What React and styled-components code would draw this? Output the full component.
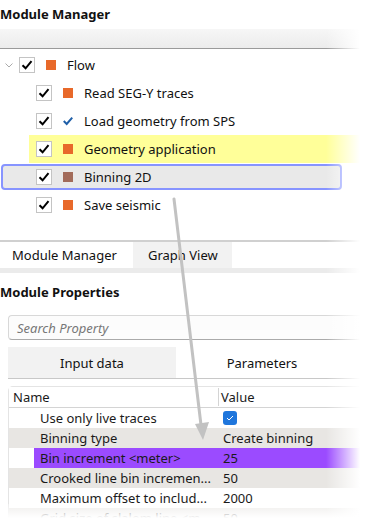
import React from 'react';
import styled, { createGlobalStyle } from 'styled-components';

const GlobalStyle = createGlobalStyle`
  html, body { margin: 0; padding: 0; background: #fff; }
  body { font-family: "Noto Sans", "Open Sans", sans-serif; font-size: 12px; color: #1a1a1a; }
  * { box-sizing: border-box; }
`;

const Page = styled.div`
  position: relative;
  width: 366px;
  height: 518px;
  overflow: hidden;
  background: #fff;
`;

const Title = styled.div`
  font-weight: 700;
  font-size: 13px;
  height: 29px;
  padding: 5px 0 0 0;
  color: #111;
`;

const Toolbar = styled.div`
  height: 20px;
  background: linear-gradient(#f6f6f6, #ececec);
  border-bottom: 1px solid #9a9a9a;
`;

const Tree = styled.div`
  display: flex;
  flex-direction: column;
  padding-top: 2px;
  height: 193px;
  border-bottom: 2px solid #d0d0d0;
`;

const Row = styled.div`
  display: flex;
  align-items: center;
  height: 28px;
  padding-left: ${(p) => p.$indent}px;
  margin-left: ${(p) => p.$offset || 0}px;
  background: ${(p) => p.$bg || 'transparent'};
  ${(p) =>
    p.$selected &&
    `
    border: 2px solid #8794ff;
    border-radius: 4px;
    background: #e9e9e9;
    height: 26px;
    margin: 1px 24px 1px 1px;
  `}
`;

const Chevron = styled.span`
  width: 21px;
  display: flex;
  justify-content: center;
  margin-left: -2px;
`;

const Check = styled.span`
  width: 16px;
  height: 16px;
  border: 1px solid #c4c4c4;
  background: #fff;
  display: flex;
  align-items: center;
  justify-content: center;
  margin-right: 11px;
`;

const Square = styled.span`
  width: 10px;
  height: 10px;
  background: ${(p) => p.$color};
  margin-right: 11px;
`;

const IconSlot = styled.span`
  width: 10px;
  display: flex;
  justify-content: center;
  margin-right: 11px;
`;

const Label = styled.span`
  font-size: 13px;
  color: #111;
`;

const TabBar = styled.div`
  display: flex;
  height: 31px;
  border-bottom: 5px solid #ebebeb;
`;

const Tab = styled.div`
  width: ${(p) => p.$w}px;
  display: flex;
  align-items: center;
  justify-content: ${(p) => (p.$center ? 'center' : 'flex-start')};
  padding-left: ${(p) => (p.$center ? 0 : p.$pad || 12)}px;
  background: ${(p) => (p.$active ? '#fff' : '#f2f2f2')};
  font-size: 13px;
  color: #111;
`;

const SubTitle = styled(Title)`
  height: auto;
  padding: 10px 0 0 0;
`;

const Search = styled.div`
  margin: 14px 0 0 8px;
  height: 25px;
  border: 1px solid #d8d8d8;
  border-bottom-color: #aaa;
  border-radius: 4px 0 0 4px;
  border-right: none;
  display: flex;
  align-items: center;
  padding-left: 8px;
  font-style: italic;
  color: #777;
  font-size: 13px;
  background: #fcfcfc;
`;

const SubTabs = styled.div`
  display: flex;
  margin: 7px 0 0 8px;
  height: 32px;
  border-bottom: 1px solid #c8c8c8;
`;

const Grid = styled.div`
  margin: 7px 0 0 8px;
  border: 1px solid #e4e4e4;
  border-right: none;
  border-radius: 5px 0 0 0;
`;

const GridRow = styled.div`
  display: grid;
  grid-template-columns: 210px 1fr;
  height: 20px;
  align-items: center;
  background: ${(p) => p.$bg || '#fff'};
  font-size: 13px;
`;

const HeadRow = styled(GridRow)`
  height: 21px;
  border-bottom: 1px solid #d4d4d4;
  & > span:first-child { padding-left: 4px; border-right: 1px solid #d4d4d4; }
  & > span:last-child { padding-left: 2px; }
`;

const NameCell = styled.span`
  height: 100%;
  display: flex;
  align-items: center;
  padding-left: 31px;
  white-space: nowrap;
  overflow: hidden;
  ${(p) => p.$hl && `margin-left: 25px; padding-left: 6px; background: #9b4bff;`}
`;

const ValueCell = styled.span`
  height: 100%;
  display: flex;
  align-items: center;
  padding-left: 4px;
  ${(p) => p.$hl && `background: #9b4bff;`}
`;

const BlueBox = styled.span`
  width: 14px;
  height: 14px;
  border-radius: 3px;
  background: #1f76dc;
  display: flex;
  align-items: center;
  justify-content: center;
`;

const FadeRight = styled.div`
  position: absolute;
  top: 0;
  right: 0;
  width: 40px;
  height: 100%;
  background: linear-gradient(to right, rgba(255,255,255,0), #fff 85%);
  pointer-events: none;
`;

const FadeBottom = styled.div`
  position: absolute;
  left: 0;
  bottom: 0;
  width: 100%;
  height: 14px;
  background: linear-gradient(rgba(255,255,255,0.3), #fff);
  pointer-events: none;
`;

const Arrow = styled.svg`
  position: absolute;
  left: 0;
  top: 0;
  pointer-events: none;
`;

const Tick = () => (
  <svg width="12" height="12" viewBox="0 0 12 12">
    <path d="M1.5 6.2 L4.6 9.3 L10.5 2.2" fill="none" stroke="#000" strokeWidth="2" />
  </svg>
);

const BlueTick = () => (
  <svg width="13" height="12" viewBox="0 0 13 12">
    <path d="M1 6 L4.8 9.8 L12 1.5" fill="none" stroke="#1f5fa8" strokeWidth="2.6" />
  </svg>
);

const modules = [
  { label: 'Read SEG-Y traces', color: '#e8692a' },
  { label: 'Load geometry from SPS', icon: true },
  { label: 'Geometry application', color: '#e8692a', bg: '#ffff99' },
  { label: 'Binning 2D', color: '#a26b5a', selected: true },
  { label: 'Save seismic', color: '#e8692a' },
];

const props = [
  { name: 'Use only live traces', check: true },
  { name: 'Binning type', value: 'Create binning', bg: '#e8e6e3' },
  { name: 'Bin increment <meter>', value: '25', hl: true },
  { name: 'Crooked line bin incremen...', value: '50', bg: '#e8e6e3' },
  { name: 'Maximum offset to includ...', value: '2000' },
  { name: 'Grid size of slalom line <m...', value: '50', bg: '#e8e6e3' },
];

export default function App() {
  return (
    <Page>
      <GlobalStyle />
      <Title>Module Manager</Title>
      <Toolbar />
      <Tree>
        <Row $indent={0}>
          <Chevron>
            <svg width="8" height="5" viewBox="0 0 8 5">
              <path d="M0.5 0.5 L4 4 L7.5 0.5" fill="none" stroke="#aaa" strokeWidth="1" />
            </svg>
          </Chevron>
          <Check><Tick /></Check>
          <Square $color="#e8692a" />
          <Label>Flow</Label>
        </Row>
        {modules.map((m) => (
          <Row
            key={m.label}
            $indent={m.selected ? 33 : m.bg ? 7 : 36}
            $offset={m.bg ? 29 : 0}
            $bg={m.bg}
            $selected={m.selected}
          >
            <Check><Tick /></Check>
            {m.icon ? <IconSlot><BlueTick /></IconSlot> : <Square $color={m.color} />}
            <Label>{m.label}</Label>
          </Row>
        ))}
      </Tree>
      <TabBar>
        <Tab $w={133} $active>Module Manager</Tab>
        <Tab $w={99} $pad={15}>Graph View</Tab>
      </TabBar>
      <SubTitle>Module Properties</SubTitle>
      <Search>Search Property</Search>
      <SubTabs>
        <Tab $w={168} $center>Input data</Tab>
        <Tab $w={172} $center $active>Parameters</Tab>
      </SubTabs>
      <Grid>
        <HeadRow>
          <span>Name</span>
          <span>Value</span>
        </HeadRow>
        {props.map((p) => (
          <GridRow key={p.name} $bg={p.bg}>
            <NameCell $hl={p.hl}>{p.name}</NameCell>
            <ValueCell $hl={p.hl}>
              {p.check ? (
                <BlueBox>
                  <svg width="8" height="6" viewBox="0 0 8 6">
                    <path d="M1 3 L3 5 L7 1" fill="none" stroke="#fff" strokeWidth="1" />
                  </svg>
                </BlueBox>
              ) : (
                p.value
              )}
            </ValueCell>
          </GridRow>
        ))}
      </Grid>
      <Arrow width="366" height="518">
        <line x1="174" y1="199" x2="201" y2="425" stroke="#c2c2c2" strokeWidth="3" strokeLinecap="round" />
        <path d="M195 424 L209 422 L203 440 Z" fill="#c2c2c2" />
      </Arrow>
      <FadeRight />
      <FadeBottom />
    </Page>
  );
}
